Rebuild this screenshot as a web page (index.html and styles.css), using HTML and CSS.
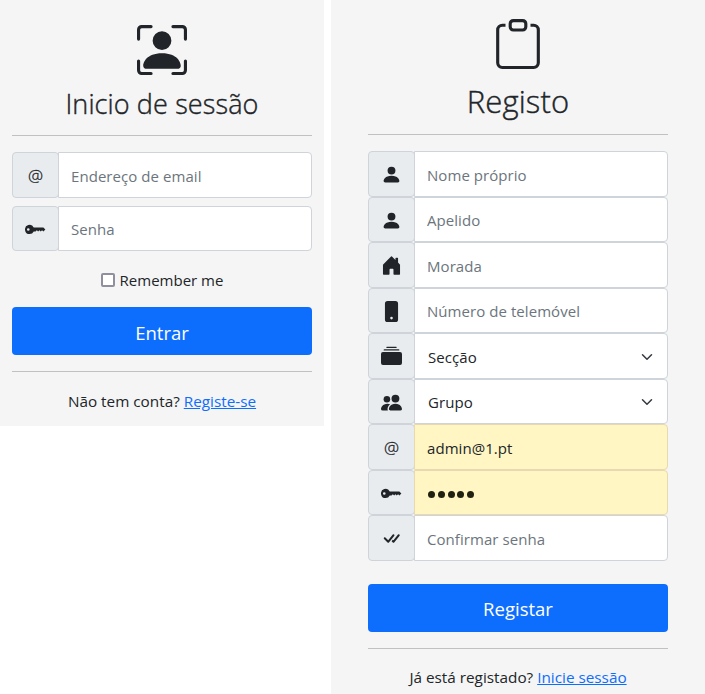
FILE: index.html
```html
<!DOCTYPE html>
<html lang="pt">
<head>
<meta charset="utf-8">
<title>Conta</title>
<link rel="stylesheet" href="styles.css">
</head>
<body>
<svg width="0" height="0" class="sprite">
  <symbol id="person" viewBox="0 0 16 16"><path d="M3 14s-1 0-1-1 1-4 6-4 6 3 6 4-1 1-1 1H3zm5-6a3 3 0 1 0 0-6 3 3 0 0 0 0 6z"/></symbol>
  <symbol id="key" viewBox="0 0 16 16"><path d="M3.5 11.5a3.5 3.5 0 1 1 3.163-5H14L15.5 8 14 9.5l-1-1-1 1-1-1-1 1-1-1-1 1H6.663a3.5 3.5 0 0 1-3.163 2zM2.5 9a1 1 0 1 0 0-2 1 1 0 0 0 0 2z"/></symbol>
  <symbol id="house" viewBox="0 0 16 16"><path d="M6.5 14.5v-3.505c0-.245.25-.495.5-.495h2c.25 0 .5.25.5.5v3.5a.5.5 0 0 0 .5.5h4a.5.5 0 0 0 .5-.5v-7a.5.5 0 0 0-.146-.354L13 5.793V2.5a.5.5 0 0 0-.5-.5h-1a.5.5 0 0 0-.5.5v1.293L8.354 1.146a.5.5 0 0 0-.708 0l-6 6A.5.5 0 0 0 1.500 7.500v7a.5.5 0 0 0 .5.5h4a.5.5 0 0 0 .5-.5z"/></symbol>
  <symbol id="phone" viewBox="0 0 16 16"><path d="M3 2a2 2 0 0 1 2-2h6a2 2 0 0 1 2 2v12a2 2 0 0 1-2 2H5a2 2 0 0 1-2-2V2zm6 11a1 1 0 1 0-2 0 1 1 0 0 0 2 0z"/></symbol>
  <symbol id="collection" viewBox="0 0 16 16"><path d="M0 13a1.5 1.5 0 0 0 1.5 1.5h13A1.5 1.5 0 0 0 16 13V6a1.5 1.5 0 0 0-1.5-1.5h-13A1.5 1.5 0 0 0 0 6v7zM2 3a.5.5 0 0 0 .5.5h11a.5.5 0 0 0 0-1h-11A.5.5 0 0 0 2 3zm2-2a.5.5 0 0 0 .5.5h7a.5.5 0 0 0 0-1h-7A.5.5 0 0 0 4 1z"/></symbol>
  <symbol id="people" viewBox="0 0 16 16"><path d="M7 14s-1 0-1-1 1-4 5-4 5 3 5 4-1 1-1 1H7zm4-6a3 3 0 1 0 0-6 3 3 0 0 0 0 6z"/><path d="M5.216 14A2.238 2.238 0 0 1 5 13c0-1.355.68-2.75 1.936-3.72A6.325 6.325 0 0 0 5 9c-4 0-5 3-5 4s1 1 1 1h4.216z"/><path d="M4.5 8a2.5 2.5 0 1 0 0-5 2.5 2.5 0 0 0 0 5z"/></symbol>
  <symbol id="check-all" viewBox="0 0 16 16"><path d="M8.97 4.97a.75.75 0 0 1 1.07 1.05l-3.99 4.99a.75.75 0 0 1-1.08.02L2.324 8.384a.75.75 0 1 1 1.06-1.06l2.094 2.093L8.95 4.992a.252.252 0 0 1 .02-.022zm-.92 5.14.92.92a.75.75 0 0 0 1.079-.02l3.992-4.99a.75.75 0 1 0-1.091-1.028L9.477 9.417l-.485-.486-.943 1.179z"/></symbol>
  <symbol id="chevron" viewBox="0 0 16 16"><path fill="none" stroke="#343a40" stroke-linecap="round" stroke-linejoin="round" stroke-width="2" d="m2 5 6 6 6-6"/></symbol>
</svg>
<main class="page">
  <form class="panel login">
    <svg class="hero" viewBox="0 0 16 16"><path d="M1.5 1a.5.5 0 0 0-.5.5v3a.5.5 0 0 1-1 0v-3A1.5 1.5 0 0 1 1.5 0h3a.5.5 0 0 1 0 1h-3zM11 .5a.5.5 0 0 1 .5-.5h3A1.5 1.5 0 0 1 16 1.5v3a.5.5 0 0 1-1 0v-3a.5.5 0 0 0-.5-.5h-3a.5.5 0 0 1-.5-.5zM.5 11a.5.5 0 0 1 .5.5v3a.5.5 0 0 0 .5.5h3a.5.5 0 0 1 0 1h-3A1.5 1.5 0 0 1 0 14.5v-3a.5.5 0 0 1 .5-.5zm15 0a.5.5 0 0 1 .5.5v3a1.5 1.5 0 0 1-1.5 1.5h-3a.5.5 0 0 1 0-1h3a.5.5 0 0 0 .5-.5v-3a.5.5 0 0 1 .5-.5z"/><path d="M3 14s-1 0-1-1 1-4 6-4 6 3 6 4-1 1-1 1H3zm8-9a3 3 0 1 1-6 0 3 3 0 0 1 6 0z"/></svg>
    <h1 class="title title-login">Inicio de sessão</h1>
    <hr class="rule">
    <div class="fields spaced">
      <div class="group"><span class="addon at">@</span><input class="control" type="email" placeholder="Endereço de email"></div>
      <div class="group"><span class="addon"><svg class="icon"><use href="#key"/></svg></span><input class="control" type="password" placeholder="Senha"></div>
    </div>
    <label class="remember"><input class="check" type="checkbox"><span>Remember me</span></label>
    <button class="submit" type="button">Entrar</button>
    <hr class="rule">
    <p class="foot">Não tem conta? <a href="#">Registe-se</a></p>
  </form>
  <form class="panel register">
    <svg class="hero" viewBox="0 0 16 16"><path d="M4 1.5H3a2 2 0 0 0-2 2V14a2 2 0 0 0 2 2h10a2 2 0 0 0 2-2V3.5a2 2 0 0 0-2-2h-1v1h1a1 1 0 0 1 1 1V14a1 1 0 0 1-1 1H3a1 1 0 0 1-1-1V3.5a1 1 0 0 1 1-1h1v-1z"/><path d="M9.500 1a.5.5 0 0 1 .5.5v1a.5.5 0 0 1-.5.5h-3a.5.5 0 0 1-.5-.5v-1a.5.5 0 0 1 .5-.5h3zm-3-1A1.5 1.5 0 0 0 5 1.500v1A1.5 1.5 0 0 0 6.500 4h3A1.5 1.5 0 0 0 11 2.500v-1A1.5 1.5 0 0 0 9.500 0h-3z"/></svg>
    <h1 class="title title-register">Registo</h1>
    <hr class="rule">
    <div class="fields">
      <div class="group"><span class="addon"><svg class="icon"><use href="#person"/></svg></span><input class="control" placeholder="Nome próprio"></div>
      <div class="group"><span class="addon"><svg class="icon"><use href="#person"/></svg></span><input class="control" placeholder="Apelido"></div>
      <div class="group"><span class="addon"><svg class="icon"><use href="#house"/></svg></span><input class="control" placeholder="Morada"></div>
      <div class="group"><span class="addon"><svg class="icon"><use href="#phone"/></svg></span><input class="control" placeholder="Número de telemóvel"></div>
      <div class="group"><span class="addon"><svg class="icon"><use href="#collection"/></svg></span><div class="control select"><span>Secção</span><svg class="chevron"><use href="#chevron"/></svg></div></div>
      <div class="group"><span class="addon"><svg class="icon"><use href="#people"/></svg></span><div class="control select"><span>Grupo</span><svg class="chevron"><use href="#chevron"/></svg></div></div>
      <div class="group"><span class="addon at">@</span><input class="control filled" value="admin@1.pt"></div>
      <div class="group"><span class="addon"><svg class="icon"><use href="#key"/></svg></span><div class="control filled dots"><i></i><i></i><i></i><i></i><i></i></div></div>
      <div class="group"><span class="addon"><svg class="icon"><use href="#check-all"/></svg></span><input class="control" type="password" placeholder="Confirmar senha"></div>
    </div>
    <button class="submit" type="button">Registar</button>
    <hr class="rule">
    <p class="foot">Já está registado? <a href="#">Inicie sessão</a></p>
  </form>
</main>
</body>
</html>
```
FILE: styles.css
```css
* { box-sizing: border-box; }
body {
  margin: 0;
  background: #fff;
  color: #212529;
  font: 400 15px/24px "Open Sans", "Noto Sans", sans-serif;
  overflow: hidden;
}
.sprite { display: none; }
.page { display: flex; align-items: flex-start; gap: 7px; }
.panel {
  display: flex;
  flex-direction: column;
  align-items: center;
  background: #f5f5f5;
}
.login { width: 324px; height: 426px; padding: 25px 12px 0; }
.register { width: 374px; height: 694px; padding: 19px 37px 0; }
.hero { width: 50px; height: 50px; fill: #212529; flex: none; }
.title {
  margin: 0;
  font-weight: 300;
  letter-spacing: 0.12px;
  white-space: nowrap;
  -webkit-text-stroke: 0.4px #212529;
}
.title-login { font-size: 27px; line-height: 34px; margin: 12px 0 14px; }
.title-register { font-size: 31px; line-height: 38px; margin: 13px 0 14px; }
.rule {
  width: 300px;
  height: 1px;
  margin: 0;
  border: 0;
  background: #c0c1c2;
  flex: none;
}
.fields { width: 300px; margin-top: 16.4px; }
.spaced { display: grid; gap: 8px; }
.group { display: flex; height: 45.5px; }
.addon {
  display: flex;
  align-items: center;
  justify-content: center;
  width: 47px;
  flex: none;
  padding-top: 1px;
  background: #e9ecef;
  border: 1px solid #ced4da;
  border-radius: 4px;
}
.at { font-size: 17px; font-weight: 300; -webkit-text-stroke: 0.3px #212529; }
.icon { width: 21px; height: 21px; fill: #212529; }
.control {
  flex: 1;
  min-width: 0;
  margin-left: -1px;
  padding: 1px 12px 0;
  border: 1px solid #ced4da;
  border-radius: 0 4px 4px 0;
  background: #fff;
  color: #212529;
  font: inherit;
  letter-spacing: 0.06px;
  outline: 0;
}
.control::placeholder { color: #6c757d; opacity: 1; }
.select { display: flex; align-items: center; justify-content: space-between; padding: 1px 12px 0 13px; }
.chevron { width: 16px; height: 12px; }
.filled { background: #fff6c4; border-color: #e8d9b0; }
.dots { display: flex; align-items: center; gap: 2.8px; padding: 3px 13px 0; }
.dots i { width: 7px; height: 7px; border-radius: 50%; background: #212112; }
.remember { display: flex; align-items: center; gap: 5px; margin: 16.6px 0 14px; height: 24px; }
.check {
  appearance: none;
  width: 14px;
  height: 14px;
  margin: 0;
  border: 2px solid #8f8f9d;
  border-radius: 2px;
  background: #fff;
}
.submit {
  width: 300px;
  height: 48px;
  flex: none;
  margin: 0 0 16px;
  padding: 4px 0 0;
  border: 0;
  border-radius: 4px;
  background: #0d6efd;
  color: #fff;
  font: 400 18.500px/30px "Open Sans", "Noto Sans", sans-serif;
}
.login .submit { margin-top: 0.6px; }
.register .submit { margin-top: 23.1px; padding-top: 2px; }
.foot { margin: 17px 0 0; font-size: 15.3px; white-space: nowrap; }
.register .foot { margin-top: 16px; }
.foot a { color: #0d6efd; text-decoration: underline; }
```
